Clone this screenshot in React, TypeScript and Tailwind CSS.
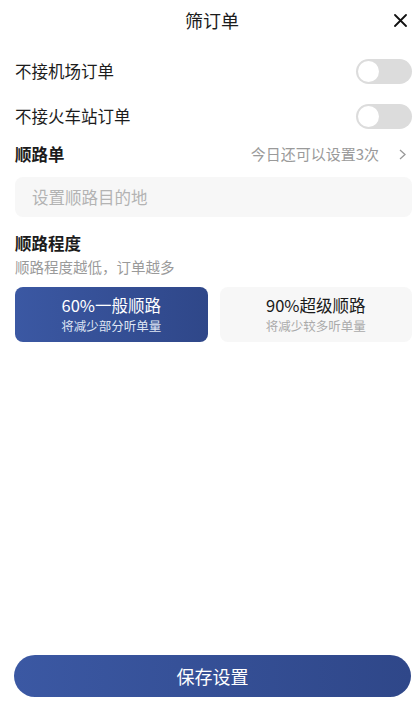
const font = { fontFamily: '"Noto Sans CJK SC", "Noto Sans", sans-serif' };

function Toggle() {
  return (
    <div className="flex h-[25px] w-[56px] items-center rounded-full bg-[#dcdcdc] px-[2px]">
      <div className="h-[21px] w-[21px] rounded-full bg-white" />
    </div>
  );
}

function App() {
  return (
    <div className="flex h-screen w-full flex-col overflow-hidden bg-white text-[#1c1c1c]" style={font}>
      <div className="relative flex h-[40px] shrink-0 items-center justify-center pl-[8px]">
        <span className="text-[18px]">筛订单</span>
        <svg className="absolute right-[9px] top-[14px]" width="13" height="13" viewBox="0 0 13 13">
          <path d="M1 1L12 12M12 1L1 12" stroke="#111" strokeWidth="1.8" strokeLinecap="round" />
        </svg>
      </div>

      <div className="flex flex-col pl-[15px] pr-[4px]">
        <div className="mt-[9px] flex h-[45px] items-center justify-between">
          <span className="text-[16.5px]">不接机场订单</span>
          <Toggle />
        </div>
        <div className="flex h-[45px] items-center justify-between">
          <span className="text-[16.5px]">不接火车站订单</span>
          <Toggle />
        </div>

        <div className="flex h-[30px] items-center justify-between">
          <span className="text-[16.5px] font-bold">顺路单</span>
          <span className="flex items-center gap-[20px] pr-[6px] text-[15px] text-[#9a9a9a]">
            今日还可以设置3次
            <svg width="7" height="11" viewBox="0 0 7 11">
              <path d="M1 1L6 5.5L1 10" fill="none" stroke="#999" strokeWidth="1.3" />
            </svg>
          </span>
        </div>

        <div className="mt-[8px] flex h-[40px] items-center rounded-[8px] bg-[#f7f7f7] px-[17px] text-[16.5px] text-[#b3b3b3]">
          设置顺路目的地
        </div>

        <div className="mt-[12px] text-[16.5px] font-bold leading-[28px]">顺路程度</div>
        <div className="text-[14.5px] leading-[20px] text-[#9a9a9a]">顺路程度越低，订单越多</div>

        <div className="mt-[10px] grid grid-cols-2 gap-[12px]">
          <div className="flex h-[55px] flex-col items-center justify-center gap-[3px] rounded-[8px] bg-gradient-to-r from-[#3b58a3] to-[#2f4789] text-white">
            <span className="text-[16.5px] leading-[20px]">60%一般顺路</span>
            <span className="text-[12.5px] leading-[16px] text-[#dfe5f3]">将减少部分听单量</span>
          </div>
          <div className="flex h-[55px] flex-col items-center justify-center gap-[3px] rounded-[8px] bg-[#f7f7f7]">
            <span className="text-[16.5px] leading-[20px] text-[#1a1a1a]">90%超级顺路</span>
            <span className="text-[12.5px] leading-[16px] text-[#aaa]">将减少较多听单量</span>
          </div>
        </div>
      </div>

      <div className="mt-auto pb-[5px] pl-[14px] pr-[5px]">
        <div className="flex h-[42px] items-center justify-center rounded-full bg-gradient-to-r from-[#3b58a3] to-[#2f4789] text-[18px] text-white">
          保存设置
        </div>
      </div>
    </div>
  );
}

export default App;
